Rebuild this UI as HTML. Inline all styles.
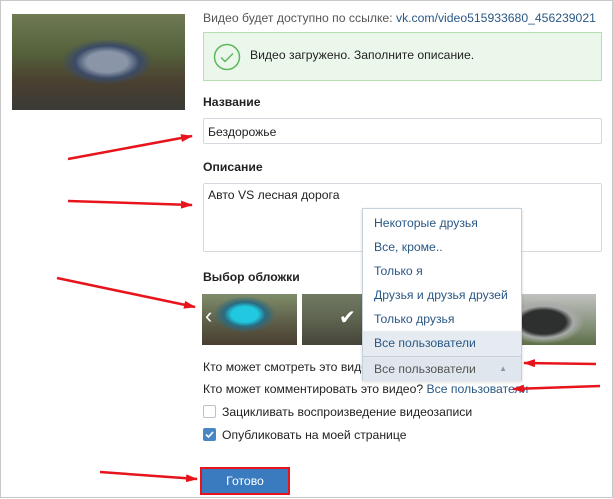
<!DOCTYPE html>
<html><head><meta charset="utf-8"><style>
*{margin:0;padding:0;box-sizing:border-box}
body{width:613px;height:499px;background:#fff;position:relative;overflow:hidden;font-family:"Liberation Sans","DejaVu Sans",sans-serif;font-size:12.2px;color:#222}
.frame{position:absolute;left:0;top:0;width:613px;height:498px;border:1px solid #c8c8c8}
.abs{position:absolute;white-space:nowrap}
.thumb{position:absolute;left:12px;top:14px;width:173px;height:96px;background:radial-gradient(ellipse at 55% 50%,#8a96a8 0 15%,#3b4a66 24%,transparent 34%),linear-gradient(180deg,#6f7a55 0%,#55623c 40%,#4b4030 70%,#3a3a36 100%)}
.green{position:absolute;left:203px;top:32px;width:399px;height:49px;background:#ecf7ec;border:1px solid #b6deb2}
.inp{position:absolute;left:203px;border:1px solid #d3d9de;background:#fff;border-radius:2px}
.lbl{font-weight:bold;color:#222}
.dd{position:absolute;left:362px;top:208px;width:160px;height:173px;background:#fff;border:1px solid #c5d0db;box-shadow:0 1px 3px rgba(0,0,0,.15)}
.dd div{height:24px;line-height:24px;padding-left:11px;color:#2a5885}
.cov{position:absolute;top:294px;height:51px}
.cb{position:absolute;left:203px;width:13px;height:13px;border:1px solid #b8c2cc;border-radius:2px;background:#fff}
.btn{position:absolute;left:200px;top:467px;width:90px;height:28px;border:2px solid #e8141c;background:#3a7bbf;color:#fff;text-align:center;line-height:24px}
svg.ar{position:absolute;left:0;top:0}
</style></head><body>
<div class="frame"></div>
<div class="thumb"></div>
<div class="abs" style="left:203px;top:11px;color:#555">Видео будет доступно по ссылке: <span style="color:#2a5885">vk.com/video515933680_456239021</span></div>
<div class="green"></div>
<svg class="abs" style="left:213px;top:43px" width="28" height="28"><circle cx="14" cy="14" r="12.5" fill="none" stroke="#5cb85c" stroke-width="1.5"/><path d="M8 14.5l4 4 8-8" fill="none" stroke="#5cb85c" stroke-width="1.5"/></svg>
<div class="abs" style="left:250px;top:48px">Видео загружено. Заполните описание.</div>
<div class="abs lbl" style="left:203px;top:95px">Название</div>
<div class="inp" style="top:118px;width:399px;height:26px"></div>
<div class="abs" style="left:208px;top:125px">Бездорожье</div>
<div class="abs lbl" style="left:203px;top:160px">Описание</div>
<div class="inp" style="top:183px;width:399px;height:69px"></div>
<div class="abs" style="left:208px;top:188px">Авто VS лесная дорога</div>
<div class="abs lbl" style="left:203px;top:270px">Выбор обложки</div>
<div class="cov" style="left:202px;width:95px;background:radial-gradient(ellipse at 45% 40%,#20c8e0 0 18%,#2a6a80 28%,transparent 42%),linear-gradient(180deg,#7f8d6a,#5b5a46 60%,#4a3e30)"></div>
<div class="abs" style="left:205px;top:303px;color:#fff;font-size:22px">‹</div>
<div class="cov" style="left:302px;width:62px;background:linear-gradient(180deg,#707a63,#5e6450 50%,#45443a)"></div>
<div class="abs" style="left:339px;top:305px;color:#fff;font-size:20px">✔</div>
<div class="cov" style="left:521px;width:75px;background:radial-gradient(ellipse at 30% 55%,#2e3030 0 30%,#a8aaa8 40%,transparent 55%),linear-gradient(180deg,#c0c2c0,#7d8a70 70%,#5e7048)"></div>
<div class="dd">
<div style="margin-top:2px">Некоторые друзья</div><div>Все, кроме..</div><div>Только я</div><div>Друзья и друзья друзей</div><div>Только друзья</div>
<div style="background:#e5ebf1;color:#2a5885;height:25px;line-height:25px">Все пользователи</div>
<div style="background:#dfe6ed;color:#555;border-top:1px solid #c5d0db;height:25px;position:relative">Все пользователи<span style="position:absolute;right:14px;top:0;font-size:8px;color:#8a98a8">▲</span></div>
</div>
<div class="abs" style="left:203px;top:360px;width:159px;overflow:hidden">Кто может смотреть это видео?</div>
<div class="abs" style="left:203px;top:382px">Кто может комментировать это видео? <span style="color:#2a5885">Все пользователи</span></div>
<div class="cb" style="top:405px"></div>
<div class="abs" style="left:222px;top:405px">Зацикливать воспроизведение видеозаписи</div>
<div class="cb" style="top:428px;background:#4a86c5;border-color:#4a86c5"></div>
<svg class="abs" style="left:203px;top:428px" width="13" height="13"><path d="M3 6.5l2.5 2.5 4.5-5" fill="none" stroke="#fff" stroke-width="1.6"/></svg>
<div class="abs" style="left:222px;top:428px">Опубликовать на моей странице</div>
<div class="btn">Готово</div>
<svg class="ar" width="613" height="499">
<defs><marker id="m" markerWidth="12" markerHeight="8" refX="11" refY="4" orient="auto" markerUnits="userSpaceOnUse"><path d="M0 0L12 4L0 8z" fill="#e8141c"/></marker></defs>
<g stroke="#e8141c" stroke-width="2.5" fill="none" marker-end="url(#m)">
<line x1="68" y1="159" x2="192" y2="136"/>
<line x1="68" y1="201" x2="192" y2="205"/>
<line x1="57" y1="278" x2="195" y2="307"/>
<line x1="596" y1="364" x2="524" y2="363"/>
<line x1="600" y1="386" x2="513" y2="389"/>
<line x1="100" y1="472" x2="197" y2="479"/>
</g></svg>
</body></html>
